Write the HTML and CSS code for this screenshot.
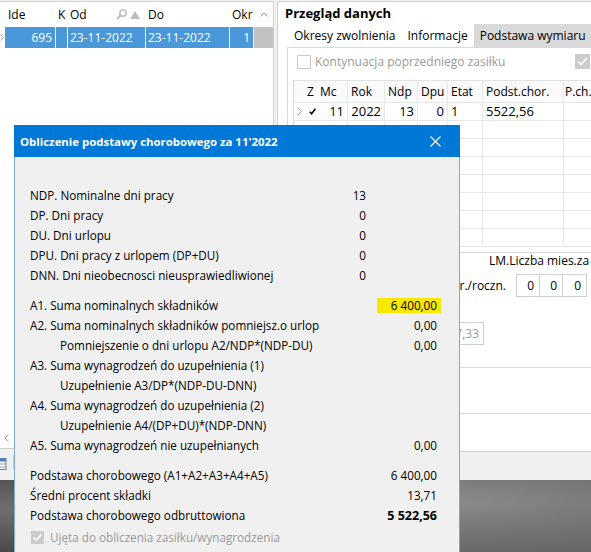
FILE: index.html
```html
<!DOCTYPE html>
<html lang="pl">
<head>
<meta charset="utf-8">
<title>Obliczenie podstawy chorobowego</title>
<link rel="stylesheet" href="styles.css">
</head>
<body>
<div class="screen">
  <div class="app">
    <section class="left">
      <div class="lgrid">
        <div class="lhead">
          <div class="ind"></div>
          <div class="c c-ide">Ide</div>
          <div class="c c-k">K</div>
          <div class="c c-od">Od
            <span class="hicons">
              <svg width="11" height="11" viewBox="0 0 11 11"><circle cx="7" cy="4" r="3.2" fill="none" stroke="#bdbdbd" stroke-width="1.6"/><path d="M4.8 6.2 L1 10" stroke="#bdbdbd" stroke-width="2"/></svg>
              <svg width="10" height="8" viewBox="0 0 10 8"><path d="M5 0 L10 8 L0 8 Z" fill="#bdbdbd"/></svg>
            </span>
          </div>
          <div class="c c-do">Do</div>
          <div class="c c-okr">Okr</div>
          <div class="vs vs-head"><svg width="8" height="5" viewBox="0 0 8 5"><path d="M0.5 4.5 L4 1 L7.5 4.5" fill="none" stroke="#a0a0a0" stroke-width="1"/></svg></div>
        </div>
        <div class="lrow">
          <div class="ind"><svg width="4" height="7" viewBox="0 0 4 7"><path d="M0.5 0.5 L3.5 3.5 L0.5 6.5" fill="none" stroke="#b0b0b0" stroke-width="1"/></svg></div>
          <div class="c c-ide num">695</div>
          <div class="c c-k"></div>
          <div class="c c-od">23-11-2022</div>
          <div class="c c-do">23-11-2022</div>
          <div class="c c-okr num">1</div>
          <div class="vs vs-thumb"></div>
        </div>
        <div class="lfill"></div>
      </div>
      <div class="hscroll"><svg width="5" height="8" viewBox="0 0 5 8"><path d="M4.5 0.5 L1 4 L4.5 7.5" fill="none" stroke="#9a9a9a" stroke-width="1"/></svg></div>
      <div class="ltool">
        <svg class="tool-icon" width="7" height="12" viewBox="0 0 7 12"><rect x="-6" y="0.5" width="12" height="11" fill="#fff" stroke="#6a7f99"/><rect x="-6" y="0.5" width="12" height="3" fill="#4b7fc0"/><path d="M-6 6 H6 M-6 9 H6" stroke="#8a9bb0"/></svg>
        <span class="tool-sep"></span>
      </div>
    </section>

    <section class="right">
      <div class="rtitle">Przegląd danych</div>
      <div class="tabs">
        <div class="tab">Okresy zwolnienia</div>
        <div class="tab">Informacje</div>
        <div class="tab tab-on">Podstawa wymiaru</div>
      </div>
      <div class="tabbody">
        <div class="chkrow">
          <span class="chk chk-empty"></span>
          <span class="chk-label">Kontynuacja poprzedniego zasiłku</span>
          <span class="chk chk-dis chk-right"><svg width="15" height="15" viewBox="0 0 15 15"><path d="M3 7.5 L6 10.5 L12 4" fill="none" stroke="#fff" stroke-width="1.6"/></svg></span>
        </div>
        <div class="rgrid">
          <div class="gr ghead">
            <div class="g"></div>
            <div class="g gh">Z</div>
            <div class="g gh gh-mc">Mc</div>
            <div class="g gh">Rok</div>
            <div class="g gh">Ndp</div>
            <div class="g gh">Dpu</div>
            <div class="g gh">Etat</div>
            <div class="g gh">Podst.chor.</div>
            <div class="g gh">P.ch.</div>
          </div>
          <div class="gr">
            <div class="g gi"><svg width="5" height="9" viewBox="0 0 5 9"><path d="M0.5 0.5 L4.5 4.5 L0.5 8.5" fill="none" stroke="#9a9a9a" stroke-width="1"/></svg></div>
            <div class="g gz"><svg width="7" height="7" viewBox="0 0 7 7"><path d="M0.8 3.8 L2.6 5.8 L6.4 0.8" fill="none" stroke="#000" stroke-width="1.5"/></svg></div>
            <div class="g gn">11</div>
            <div class="g gn">2022</div>
            <div class="g gn">13</div>
            <div class="g gn">0</div>
            <div class="g gt">1</div>
            <div class="g gt">5522,56</div>
            <div class="g"></div>
          </div>
          <div class="gr"><div class="g"></div><div class="g"></div><div class="g"></div><div class="g"></div><div class="g"></div><div class="g"></div><div class="g"></div><div class="g"></div><div class="g"></div></div>
          <div class="gr"><div class="g"></div><div class="g"></div><div class="g"></div><div class="g"></div><div class="g"></div><div class="g"></div><div class="g"></div><div class="g"></div><div class="g"></div></div>
          <div class="gr"><div class="g"></div><div class="g"></div><div class="g"></div><div class="g"></div><div class="g"></div><div class="g"></div><div class="g"></div><div class="g"></div><div class="g"></div></div>
          <div class="gr"><div class="g"></div><div class="g"></div><div class="g"></div><div class="g"></div><div class="g"></div><div class="g"></div><div class="g"></div><div class="g"></div><div class="g"></div></div>
          <div class="gr"><div class="g"></div><div class="g"></div><div class="g"></div><div class="g"></div><div class="g"></div><div class="g"></div><div class="g"></div><div class="g"></div><div class="g"></div></div>
          <div class="gr"><div class="g"></div><div class="g"></div><div class="g"></div><div class="g"></div><div class="g"></div><div class="g"></div><div class="g"></div><div class="g"></div><div class="g"></div></div>
          <div class="gr"><div class="g"></div><div class="g"></div><div class="g"></div><div class="g"></div><div class="g"></div><div class="g"></div><div class="g"></div><div class="g"></div><div class="g"></div></div>
        </div>
        <div class="lower">
          <div class="lmhead">LM.Liczba mies.za</div>
          <div class="lmrow">
            <span class="lmlabel">Wynagr./roczn.</span>
            <span class="lmboxes"><span class="lmcell">0</span><span class="lmcell">0</span><span class="lmcell">0</span></span>
          </div>
          <div class="valrow"><span class="valbox">27,33</span></div>
          <div class="sect sect-a"></div>
          <div class="sect sect-b"></div>
        </div>
      </div>
      <div class="rstrip"></div>
    </section>
  </div>
  <div class="desktop"><div class="desk-left"></div><div class="desk-right"></div></div>

  <div class="dialog">
    <div class="dtitle">
      <span>Obliczenie podstawy chorobowego za 11'2022</span>
      <svg width="11" height="11" viewBox="0 0 11 11"><path d="M0.5 0.5 L10.5 10.5 M10.5 0.5 L0.5 10.5" stroke="#fff" stroke-width="1.1"/></svg>
    </div>
    <div class="dbody">
      <div class="grp grp1">
        <div class="row"><span class="lbl">NDP. Nominalne dni pracy</span><span class="val">13</span></div>
        <div class="row"><span class="lbl">DP. Dni pracy</span><span class="val">0</span></div>
        <div class="row"><span class="lbl">DU. Dni urlopu</span><span class="val">0</span></div>
        <div class="row"><span class="lbl">DPU. Dni pracy z urlopem (DP+DU)</span><span class="val">0</span></div>
        <div class="row"><span class="lbl">DNN. Dni nieobecnosci nieusprawiedliwionej</span><span class="val">0</span></div>
      </div>
      <div class="grp">
        <div class="row"><span class="lbl">A1. Suma nominalnych składników</span><span class="val hl">6 400,00</span></div>
        <div class="row"><span class="lbl">A2. Suma nominalnych składników pomniejsz.o urlop</span><span class="val">0,00</span></div>
        <div class="row"><span class="lbl ind2">Pomniejszenie o dni urlopu A2/NDP*(NDP-DU)</span><span class="val">0,00</span></div>
        <div class="row"><span class="lbl">A3. Suma wynagrodzeń do uzupełnienia (1)</span><span class="val"></span></div>
        <div class="row"><span class="lbl ind2">Uzupełnienie A3/DP*(NDP-DU-DNN)</span><span class="val"></span></div>
        <div class="row"><span class="lbl">A4. Suma wynagrodzeń do uzupełnienia (2)</span><span class="val"></span></div>
        <div class="row"><span class="lbl ind2">Uzupełnienie A4/(DP+DU)*(NDP-DNN)</span><span class="val"></span></div>
        <div class="row"><span class="lbl">A5. Suma wynagrodzeń nie uzupełnianych</span><span class="val">0,00</span></div>
      </div>
      <div class="grp">
        <div class="row"><span class="lbl">Podstawa chorobowego (A1+A2+A3+A4+A5)</span><span class="val">6 400,00</span></div>
        <div class="row"><span class="lbl">Średni procent składki</span><span class="val">13,71</span></div>
        <div class="row"><span class="lbl">Podstawa chorobowego odbruttowiona</span><span class="val strong">5 522,56</span></div>
        <div class="row chkline">
          <span class="chk chk-dis chk-small"><svg width="13" height="13" viewBox="0 0 13 13"><path d="M2.5 6.5 L5.2 9.2 L10.5 3.5" fill="none" stroke="#fff" stroke-width="1.5"/></svg></span>
          <span class="chk-label">Ujęta do obliczenia zasiłku/wynagrodzenia</span>
        </div>
      </div>
    </div>
  </div>
</div>
</body>
</html>
```

FILE: styles.css
```css
* { box-sizing: border-box; margin: 0; padding: 0; }

body {
  margin: 0;
  font-family: "Open Sans", "Noto Sans", sans-serif;
  font-size: 12px;
  color: #000;
  background: #f0f0f0;
  overflow: hidden;
}

.screen {
  position: relative;
  width: 591px;
  height: 552px;
  overflow: hidden;
}

.app {
  display: flex;
  height: 480px;
  padding-top: 1px;
  gap: 3px;
}

/* ---------- left panel ---------- */
.left {
  width: 274px;
  flex: none;
  display: flex;
  flex-direction: column;
  background: #fff;
  border-top: 1px solid #d2d2d2;
  border-right: 1px solid #d2d2d2;
}

.lgrid {
  flex: 1;
  display: flex;
  flex-direction: column;
}

.lhead, .lrow {
  display: flex;
  height: 25px;
  line-height: 25px;
}

.lrow {
  height: 21px;
  line-height: 21px;
}

.ind {
  width: 5px;
  flex: none;
  display: flex;
  align-items: center;
  overflow: hidden;
}

.c {
  flex: none;
  white-space: nowrap;
  overflow: hidden;
  padding-left: 3px;
  border-right: 1px solid #fff;
}

.c-ide { width: 51px; }
.c-k { width: 12px; padding-left: 2px; }
.c-od { width: 78px; padding-left: 2px; display: flex; align-items: center; }
.c-do { width: 84px; padding-left: 2px; }
.c-okr { width: 24px; padding-left: 2px; }

.hicons {
  margin-left: auto;
  margin-right: 5px;
  display: flex;
  align-items: center;
  gap: 3px;
}

.lrow .c {
  background: #4a98da;
  color: #fff;
}

.lrow .num {
  text-align: right;
  padding-right: 3px;
}

.vs {
  width: 19px;
  flex: none;
}

.vs-head {
  display: flex;
  justify-content: center;
  align-items: center;
}

.vs-thumb {
  background: #c2c2c2;
}

.lfill {
  flex: 1;
}

.hscroll {
  height: 20px;
  flex: none;
  display: flex;
  align-items: center;
  padding-left: 4px;
  background: #fff;
}

.ltool {
  height: 32px;
  flex: none;
  border-top: 1px solid #cfcfcf;
  background: #f0f0f0;
  display: flex;
  align-items: flex-start;
  padding-top: 9px;
}

.tool-sep {
  width: 1px;
  height: 14px;
  background: #c8c8c8;
  margin-left: 6px;
  margin-top: -3px;
}

/* ---------- right panel ---------- */
.right {
  flex: 1;
  min-width: 0;
  display: flex;
  flex-direction: column;
  background: #fff;
  border-top: 1px solid #d2d2d2;
  border-left: 1px solid #d2d2d2;
  overflow: hidden;
}

.rtitle {
  height: 22px;
  line-height: 22px;
  padding-left: 7px;
  font-weight: 700;
  font-size: 13px;
}

.tabs {
  display: flex;
  height: 23px;
  padding-left: 10px;
  white-space: nowrap;
}

.tab {
  padding: 0 6px;
  line-height: 23px;
  flex: none;
}

.tab-on {
  background: #d9d9d9;
}

.tabbody {
  height: 404px;
  flex: none;
  margin-left: 9px;
  border-top: 1px solid #d9d9d9;
  border-left: 1px solid #d9d9d9;
  display: flex;
  flex-direction: column;
}

.chkrow {
  display: flex;
  align-items: center;
  padding: 6px 1px 0 9px;
  height: 21px;
}

.chk {
  flex: none;
  display: inline-flex;
}

.chk-empty {
  width: 14px;
  height: 14px;
  border: 1px solid #c9c9c9;
  background: #fff;
}

.chk-label {
  color: #9a9a9a;
  margin-left: 4px;
  white-space: nowrap;
}

.chk-dis {
  background: #cccccc;
}

.chk-right {
  margin-left: auto;
  width: 15px;
  height: 15px;
}

.rgrid {
  margin: 11px 0 0 5px;
  border-left: 1px solid #d6d6d6;
  border-top: 1px solid #e2e2e2;
}

.gr {
  display: grid;
  grid-template-columns: 10px 16px 28px 37px 33px 30px 35px 81px 27px;
  height: 18px;
  line-height: 17px;
  border-bottom: 1px solid #e8e8e8;
}

.ghead {
  height: 22px;
  line-height: 21px;
  background: #fafafa;
}

.g {
  border-right: 1px solid #e8e8e8;
  white-space: nowrap;
  overflow: hidden;
}

.g:first-child, .g:nth-child(2), .g:last-child {
  border-right: none;
}

.gh {
  padding-left: 3px;
}

.gh-mc {
  padding-left: 0;
}

.ghead .g:last-child {
  padding-left: 1px;
  overflow: visible;
}

.gi {
  display: flex;
  align-items: center;
  padding-left: 3px;
}

.gz {
  display: flex;
  align-items: center;
  padding-left: 5px;
}

.gn {
  text-align: right;
  padding-right: 3px;
  font-size: 13px;
}

.gt {
  padding-left: 3px;
  font-size: 13px;
}

.lower {
  margin-top: 5px;
  border-top: 1px solid #d9d9d9;
  flex: 1;
  display: flex;
  flex-direction: column;
}

.lmhead {
  height: 15px;
  line-height: 15px;
  padding-left: 201px;
  white-space: nowrap;
}

.lmrow {
  display: flex;
  align-items: center;
  margin-top: 6px;
  height: 23px;
}

.lmlabel {
  width: 218px;
  text-align: right;
  white-space: nowrap;
  flex: none;
}

.lmboxes {
  display: flex;
  margin-left: 10px;
  border: 1px solid #cfcfcf;
  height: 23px;
}

.lmcell {
  width: 23px;
  text-align: right;
  padding-right: 5px;
  line-height: 21px;
  border-right: 1px solid #cfcfcf;
}

.lmcell:last-child {
  border-right: none;
}

.valrow {
  margin-top: 25px;
  height: 23px;
  display: flex;
}

.valbox {
  margin-left: 150px;
  width: 46px;
  height: 23px;
  line-height: 21px;
  border: 1px solid #cfcfcf;
  color: #9a9a9a;
  text-align: right;
  padding-right: 4px;
}

.sect {
  border-top: 1px solid #d9d9d9;
}

.sect-a {
  margin-top: 22px;
  height: 46px;
}

.sect-b {
  flex: 1;
}

.rstrip {
  flex: 1;
  border-top: 1px solid #d2d2d2;
  background: #f0f0f0;
}

/* ---------- desktop background ---------- */
.desktop {
  height: 72px;
  display: flex;
  background: linear-gradient(180deg, #7b7b7b 0%, #656565 60%, #555 100%);
}

.desk-left {
  width: 20px;
  background: linear-gradient(180deg, #555 0%, #6f6f6f 40%, #4a4a4a 100%);
}

.desk-right {
  flex: 1;
  background: radial-gradient(ellipse at 70% 30%, #8c8c8c 0%, #747474 45%, #5c5c5c 100%);
}

/* ---------- dialog ---------- */
.dialog {
  position: absolute;
  left: 14px;
  top: 125px;
  width: 446px;
  height: 460px;
  background: #f0f0f0;
  border: 1px solid #7fa6d8;
  border-top: none;
  font-size: 11.7px;
}

.dtitle {
  height: 32px;
  margin: 0 -1px;
  background: #0078d7;
  color: #fff;
  font-weight: 700;
  font-size: 11.4px;
  display: flex;
  align-items: center;
  justify-content: space-between;
  padding: 0 19px 0 6px;
}

.dbody {
  padding: 28px 18px 0 15px;
  display: flex;
  flex-direction: column;
  gap: 10px;
}

.row {
  display: flex;
  align-items: center;
  height: 20px;
  white-space: nowrap;
}

.lbl {
  flex: 1;
}

.ind2 {
  padding-left: 30px;
}

.val {
  width: 64px;
  text-align: right;
  padding-right: 4px;
  flex: none;
}

.grp1 .val {
  margin-right: 71px;
}

.hl {
  background: #f8e800;
  height: 15px;
  line-height: 15px;
}

.strong {
  font-weight: 700;
  font-size: 12.5px;
}

.chkline {
  margin-top: 2px;
}

.chk-small {
  width: 13px;
  height: 13px;
  margin-left: 1px;
}

.chkline .chk-label {
  margin-left: 6px;
}
```
